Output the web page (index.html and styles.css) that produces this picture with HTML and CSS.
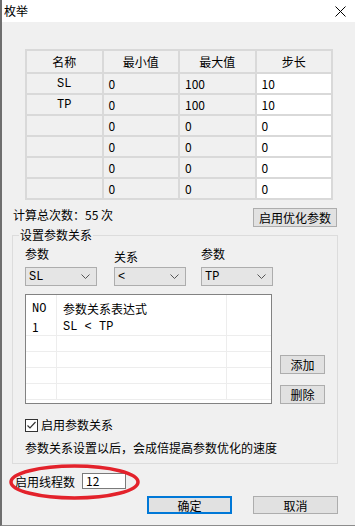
FILE: index.html
```html
<!DOCTYPE html>
<html lang="zh">

<head>
    <meta charset="UTF-8">
    <meta name="viewport" content="width=device-width, initial-scale=1.0">
    <title>枚举</title>
    <link rel="stylesheet" href="styles.css">
</head>

<body>
    <div class="window">
        <div class="titlebar">
            <span class="title">枚举</span>
            <svg class="close" width="11" height="11" viewBox="0 0 11 11">
                <path d="M0.5 0.5L10.5 10.5M10.5 0.5L0.5 10.5" stroke="#000" stroke-width="1" fill="none" />
            </svg>
        </div>
        <div class="content">
            <table class="params">
                <thead>
                    <tr>
                        <th>名称</th>
                        <th>最小值</th>
                        <th>最大值</th>
                        <th>步长</th>
                    </tr>
                </thead>
                <tbody>
                    <tr><td class="name mono">SL</td><td>0</td><td>100</td><td class="edit">10</td></tr>
                    <tr><td class="name mono">TP</td><td>0</td><td>100</td><td class="edit">10</td></tr>
                    <tr><td class="name"></td><td>0</td><td>0</td><td class="edit">0</td></tr>
                    <tr><td class="name"></td><td>0</td><td>0</td><td class="edit">0</td></tr>
                    <tr><td class="name"></td><td>0</td><td>0</td><td class="edit">0</td></tr>
                    <tr><td class="name"></td><td>0</td><td>0</td><td class="edit">0</td></tr>
                </tbody>
            </table>

            <div class="stats">
                <span class="count">计算总次数：55 次</span>
                <button class="btn wide">启用优化参数</button>
            </div>

            <fieldset class="group">
                <legend>设置参数关系</legend>
                <div class="selectors">
                    <div class="field">
                        <label>参数</label>
                        <div class="select"><span class="mono">SL</span>
                            <svg width="9" height="5" viewBox="0 0 9 5"><path d="M0.5 0.5L4.5 4.5L8.5 0.5" stroke="#555" fill="none" /></svg>
                        </div>
                    </div>
                    <div class="field">
                        <label class="lower">关系</label>
                        <div class="select"><span class="mono">&lt;</span>
                            <svg width="9" height="5" viewBox="0 0 9 5"><path d="M0.5 0.5L4.5 4.5L8.5 0.5" stroke="#555" fill="none" /></svg>
                        </div>
                    </div>
                    <div class="field">
                        <label>参数</label>
                        <div class="select"><span class="mono">TP</span>
                            <svg width="9" height="5" viewBox="0 0 9 5"><path d="M0.5 0.5L4.5 4.5L8.5 0.5" stroke="#555" fill="none" /></svg>
                        </div>
                    </div>
                </div>

                <div class="relations">
                    <div class="listbox">
                        <table class="list">
                            <thead>
                                <tr><th class="mono">NO</th><th>参数关系表达式</th><th></th></tr>
                            </thead>
                            <tbody>
                                <tr><td>1</td><td class="mono">SL &lt; TP</td><td></td></tr>
                                <tr><td></td><td></td><td></td></tr>
                                <tr><td></td><td></td><td></td></tr>
                                <tr><td></td><td></td><td></td></tr>
                                <tr><td></td><td></td><td></td></tr>
                            </tbody>
                        </table>
                    </div>
                    <div class="side-buttons">
                        <button class="btn small">添加</button>
                        <button class="btn small">删除</button>
                    </div>
                </div>

                <label class="check">
                    <span class="box">
                        <svg width="11" height="11" viewBox="0 0 11 11"><path d="M1.5 5.5L4 8L9.5 2" stroke="#333" stroke-width="1.2" fill="none" /></svg>
                    </span>
                    启用参数关系
                </label>
                <p class="hint">参数关系设置以后，会成倍提高参数优化的速度</p>
            </fieldset>

            <div class="threads">
                <span>启用线程数</span>
                <span class="input">12</span>
                <svg class="ring" width="131" height="36" viewBox="0 0 131 36">
                    <ellipse cx="65.5" cy="18" rx="63.5" ry="16" stroke="#e3222b" stroke-width="3.5" fill="none" />
                </svg>
            </div>

            <div class="actions">
                <button class="btn action primary">确定</button>
                <button class="btn action">取消</button>
            </div>
        </div>
    </div>
</body>

</html>
```

FILE: styles.css
```css
body {
    margin: 0;
    background-color: #ffffff;
    font-family: "Noto Sans CJK SC", "Liberation Sans", sans-serif;
    font-size: 12px;
    color: #000000;
}

.mono {
    font-family: "Liberation Mono", "Noto Sans CJK SC", monospace;
}

.window {
    width: 355px;
    height: 526px;
    box-sizing: border-box;
    border-left: 2px solid #6e6e6e;
    border-bottom: 1px solid #8c8c8c;
    background-color: #f0f0f0;
}

.titlebar {
    height: 22px;
    background-color: #ffffff;
    display: flex;
    align-items: center;
    justify-content: space-between;
    padding: 0 9px 0 2px;
}

.title {
    line-height: 22px;
}

.content {
    padding: 27px 17px 0 10px;
}

/* parameter grid */
.params {
    margin-left: 13px;
    width: 308px;
    border-collapse: collapse;
    table-layout: fixed;
}

.params th,
.params td {
    border: 2px solid #d9d9d9;
    padding: 0 5px;
    text-align: left;
    font-weight: normal;
    line-height: 14px;
}

.params thead tr {
    height: 23px;
}

.params tbody tr {
    height: 21px;
}

.params th,
.params td.name {
    text-align: center;
}

.params td.edit {
    background-color: #ffffff;
}

.stats {
    display: flex;
    justify-content: space-between;
    align-items: flex-start;
    margin-top: 8px;
    padding-left: 1px;
}

.count {
    line-height: 13px;
}

.btn {
    font-family: "Noto Sans CJK SC", sans-serif;
    font-size: 12px;
    color: #000000;
    background-color: #e1e1e1;
    border: 1px solid #adadad;
    border-radius: 0;
    padding: 0;
    margin: 0;
    line-height: 15px;
}

.wide {
    width: 84px;
    height: 19px;
    margin-right: 1px;
}

/* group box */
.group {
    margin: 0;
    padding: 0 12px 8px 12px;
    border: 1px solid #dcdcdc;
    min-width: 0;
}

.group legend {
    margin-left: -6px;
    padding: 0 1px;
    line-height: 16px;
}

.selectors {
    display: grid;
    grid-template-columns: 89px 87px 72px;
}

.field label {
    display: block;
    line-height: 14px;
    padding-top: 4px;
    box-sizing: border-box;
    height: 24px;
}

.field label.lower {
    padding-top: 7px;
}

.select {
    width: 72px;
    height: 19px;
    box-sizing: border-box;
    border: 1px solid #adadad;
    background-color: #e5e5e5;
    display: flex;
    align-items: center;
    justify-content: space-between;
    padding: 0 6px 0 3px;
}

.relations {
    display: flex;
    align-items: flex-end;
    gap: 8px;
    margin-top: 8px;
}

.listbox {
    width: 248px;
    height: 110px;
    box-sizing: border-box;
    border: 1px solid #828282;
    background-color: #ffffff;
    overflow: hidden;
}

.list {
    width: 100%;
    border-collapse: collapse;
    table-layout: fixed;
}

.list th,
.list td {
    text-align: left;
    font-weight: normal;
    padding: 0 0 0 6px;
    line-height: 14px;
    border-left: 1px solid #ededed;
}

.list th:first-child,
.list td:first-child {
    width: 24px;
    border-left: none;
}

.list th:nth-child(2),
.list td:nth-child(2) {
    width: 163px;
}

.list thead tr {
    height: 24px;
}

.list th {
    padding-top: 7px;
    vertical-align: top;
}

.list tbody td {
    height: 16px;
    box-sizing: border-box;
    padding-top: 0;
    padding-bottom: 0;
    border-bottom: 1px solid #ededed;
}

.side-buttons {
    display: flex;
    flex-direction: column;
    gap: 11px;
}

.small {
    width: 45px;
    height: 19px;
}

.check {
    display: flex;
    align-items: center;
    gap: 3px;
    margin-top: 14px;
    line-height: 14px;
}

.box {
    width: 13px;
    height: 13px;
    box-sizing: border-box;
    border: 1px solid #333333;
    background-color: #ffffff;
    display: flex;
}

.hint {
    margin: 9px 0 0 0;
    line-height: 14px;
}

/* thread count */
.threads {
    position: relative;
    display: flex;
    align-items: center;
    gap: 7px;
    margin-top: 9px;
    padding-left: 3px;
    height: 16px;
}

.input {
    width: 44px;
    height: 16px;
    box-sizing: border-box;
    border: 1px solid #7a7a7a;
    background-color: #ffffff;
    padding-left: 3px;
    line-height: 14px;
}

.ring {
    position: absolute;
    left: -3px;
    top: -9px;
}

.actions {
    display: flex;
    justify-content: flex-end;
    gap: 21px;
    margin-top: 7px;
}

.action {
    width: 85px;
    height: 18px;
}

.primary {
    border: 2px solid #0078d7;
}
```
